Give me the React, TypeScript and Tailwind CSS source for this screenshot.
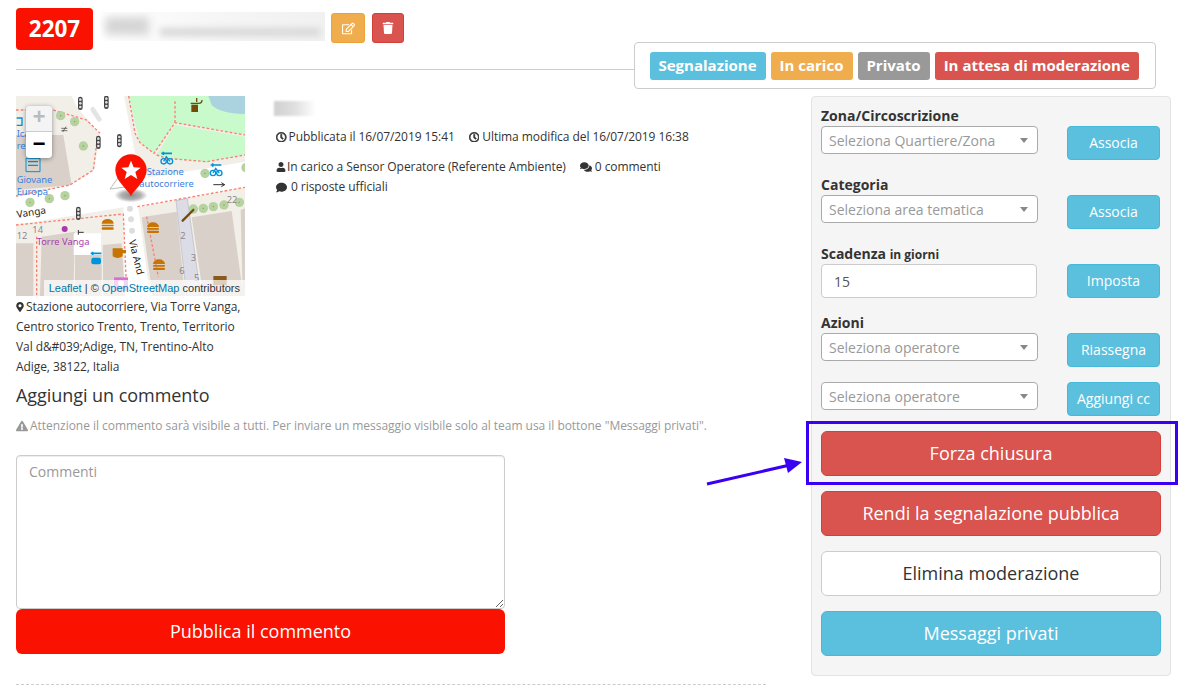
import React from "react";
import { FaRegEdit, FaTrash, FaRegClock, FaUser, FaComments, FaComment, FaMapMarkerAlt, FaExclamationTriangle } from "react-icons/fa";

const Tree = ({ x, y }: { x: number; y: number }) => (
  <g>
    <circle cx={x} cy={y} r={14} fill="#b5d29f" />
    <circle cx={x} cy={y} r={2} fill="#a08a6a" />
  </g>
);
const Light = ({ x, y }: { x: number; y: number }) => (
  <g>
    <rect x={x - 7} y={y - 20} width={14} height={40} rx={7} fill="#444" />
    <circle cx={x} cy={y - 11} r={4} fill="#ddd" />
    <circle cx={x} cy={y} r={4} fill="#ddd" />
    <circle cx={x} cy={y + 11} r={4} fill="#ddd" />
  </g>
);
const Burger = ({ x, y }: { x: number; y: number }) => (
  <g fill="#c77400">
    <path d={`M${x - 18} ${y - 4} a18 14 0 0 1 36 0 z`} />
    <rect x={x - 18} y={y - 1} width={36} height={5} rx={2} />
    <rect x={x - 18} y={y + 7} width={36} height={7} rx={3} />
  </g>
);
const Bike = ({ x, y }: { x: number; y: number }) => (
  <g stroke="#0092da" strokeWidth={4} fill="none">
    <path d={`M${x - 16} ${y - 15} h32 m-26 -5 v10`} strokeWidth={5} />
    <circle cx={x - 9} cy={y + 9} r={8} />
    <circle cx={x + 10} cy={y + 9} r={8} />
    <path d={`M${x - 9} ${y + 9} l8 -14 l11 14`} />
  </g>
);

function MapDrawing() {
  const label = { fontFamily: '"Noto Sans", sans-serif', fontSize: 28 };
  const dash = { fill: "none", stroke: "#fa8072", strokeWidth: 4, strokeDasharray: "8 6" };
  return (
    <svg viewBox="48 18 687 600" width={229} height={200} className="block">
      <defs>
        <radialGradient id="pinShadow">
          <stop offset="0%" stopColor="#000" stopOpacity="0.45" />
          <stop offset="60%" stopColor="#000" stopOpacity="0.3" />
          <stop offset="100%" stopColor="#000" stopOpacity="0" />
        </radialGradient>
      </defs>
      <rect x="48" y="18" width="687" height="600" fill="#ffffff" />
      <path d="M48 18H215L230 50 280 110 300 135 282 240 210 285 48 322Z" fill="#f2efe9" />
      <path d="M48 135H130L190 135 215 285 48 300Z" fill="#d9d0c9" />
      <path d="M48 60L160 60 260 90 300 130" {...dash} />
      <path d="M290 160L280 240 210 285 48 318" {...dash} />
      <path d="M372 18H735V215L620 235 445 262 405 190Z" fill="#f2efe9" />
      <path d="M386 18H735V135L525 98 490 150 462 190 420 158Z" fill="#c8facc" />
      <path d="M525 105L735 140V195L620 215 500 205 470 195Z" fill="#c8facc" />
      <path d="M625 18H735V72Q660 70 635 45Z" fill="#aad3df" />
      <path d="M386 18L405 130 420 158 462 190 525 98 735 135M470 195L500 205 620 215 735 195M525 98L525 30" {...dash} />
      <path d="M330 297L360 255 385 290Z" fill="#fff" stroke="#9a9a9a" strokeWidth="2" />
      <path d="M48 405L370 352 375 618H48Z" fill="#f2efe9" />
      <path d="M48 460H100V618H48ZM125 440L225 425 220 618H120ZM308 465L365 460 375 618H310ZM225 495H305V618H225Z" fill="#d9d0c9" />
      <rect x="221" y="430" width="82" height="65" fill="#fff" />
      <path d="M48 405L370 372 378 560" {...dash} />
      <path d="M110 440V618" {...dash} />
      <path d="M415 352L735 292V618H450Z" fill="#f2efe9" />
      <path d="M425 382L530 365 555 618H458ZM575 382L695 363 730 618H610ZM722 360L735 355V618H728Z" fill="#d9d0c9" />
      <path d="M528 332L562 325 602 618H560Z" fill="#dcdce6" stroke="#b8b8c4" strokeWidth="2" />
      <path d="M412 350L735 292" {...dash} />
      <path d="M440 380L475 560" {...dash} />
      <circle cx="390" cy="356" r="9" fill="#ddd" />
      <circle cx="393" cy="388" r="9" fill="#ddd" />
      <circle cx="396" cy="422" r="9" fill="#ddd" />
      <path d="M278 58L298 88" stroke="#e4e4e4" strokeWidth="14" strokeLinecap="round" />
      {[[182, 77], [224, 95], [250, 168], [90, 337], [148, 326], [195, 317], [580, 357], [610, 355], [640, 350], [672, 345], [718, 337], [615, 250], [738, 233]].map(([x, y]) => (
        <Tree key={`${x}-${y}`} x={x} y={y} />
      ))}
      <Light x={241} y={40} />
      <Light x={319} y={37} />
      <Light x={295} y={157} />
      <Light x={358} y={152} />
      <Light x={235} y={370} />
      <Burger x={323} y={405} />
      <Burger x={459} y={415} />
      <Burger x={477} y={526} />
      <Bike x={500} y={205} />
      <Bike x={648} y={240} />
      <g stroke="#0092da" strokeWidth="5" fill="none"><path d="M272 490h32m-26-5v10" /></g>
      <rect x="274" y="503" width="29" height="20" rx="6" fill="#0092da" />
      <path d="M338 475h30v24q-15 10-30 0ZM368 480h10v10h-10ZM336 506h40" fill="#c77400" />
      <path d="M342 562h42v40h-42Z" fill="#d96fd6" />
      <circle cx="363" cy="580" r="9" fill="#fff" />
      <path d="M640 558h40v28h-40Z" fill="#8a5a1c" />
      <path d="M548 392L580 360" stroke="#734a08" strokeWidth="7" strokeLinecap="round" />
      <rect x="574" y="44" width="20" height="22" fill="#734a08" />
      <path d="M572 40h24q10 0 10-10M590 24v12" stroke="#734a08" strokeWidth="4" fill="none" />
      <path d="M50 84h16v22H50" fill="none" stroke="#0092da" strokeWidth="4" />
      <path d="M78 205h42v40H78Z" fill="none" stroke="#0092da" strokeWidth="3" />
      <path d="M84 215h30M84 226h30" stroke="#0092da" strokeWidth="4" />
      <path d="M184 115h18M184 122h18M198 110l-10 16" stroke="#333" strokeWidth="2" />
      <path d="M640 284h34M664 278l10 6-10 6" stroke="#333" strokeWidth="3" fill="none" />
      <path d="M235 427h16M235 420v14" stroke="#333" strokeWidth="3" />
      <circle cx="194" cy="417" r="9" fill="#ac39ac" />
      <g {...label} fill="#3a7fe0">
        <text x="440" y="255">Stazione</text>
        <text x="418" y="290">autocorriere</text>
        <text x="50" y="280">Giovane</text>
        <text x="50" y="315">Europa</text>
        <text x="50" y="142">Ica</text>
        <text x="50" y="178">rer</text>
      </g>
      <g {...label} fill="#8a8a8a">
        <text x="680" y="340">22</text>
        <text x="97" y="428">14</text>
        <text x="50" y="447">12</text>
        <text x="541" y="446">2</text>
        <text x="572" y="513">3</text>
        <text x="538" y="553">6</text>
        <text x="582" y="574">5</text>
      </g>
      <text {...label} x="110" y="464" fill="#ac39ac">Torre Vanga</text>
      <text {...label} fontSize={30} x="52" y="384" fill="#222" transform="rotate(-9 52 384)">Vanga</text>
      <text {...label} fontSize={30} x="386" y="452" fill="#222" transform="rotate(76 386 452)">Via And</text>
      <ellipse cx="393" cy="316" rx="50" ry="21" fill="url(#pinShadow)" />
      <path d="M393 318C380 295 346 272 346 240A47 47 0 0 1 440 240C440 272 406 295 393 318Z" fill="#fb1100" />
      <path d="M393 212l8 20 21 1-16 13 6 21-19-12-19 12 6-21-16-13 21-1Z" fill="#fff" />
    </svg>
  );
}

const Badge = ({ className, children }: { className: string; children: React.ReactNode }) => (
  <span className={`inline-flex h-[28px] items-center rounded-[3px] pr-[9.5px] pl-[8.5px] text-[15px] font-bold text-white ${className}`}>{children}</span>
);

const FieldLabel = ({ children }: { children: React.ReactNode }) => (
  <div className="h-[20px] text-[14px] leading-[20px] font-bold text-[#333]">{children}</div>
);

const SideButton = ({ children }: { children: React.ReactNode }) => (
  <button className="flex h-[34px] w-[93px] items-center justify-center rounded-[4px] border border-[#46b8da] bg-[#5bc0de] pb-[2px] text-[14px] text-white">{children}</button>
);

const Select2 = ({ children }: { children: string }) => (
  <div className="flex h-[28px] w-[217px] items-center justify-between rounded-[4px] border border-[#aaaaaa] bg-white pr-[9px] pl-[7px] text-[14px] text-[#999999]">
    <span>{children}</span>
    <span className="h-0 w-0 border-x-[4px] border-t-[5px] border-x-transparent border-t-[#888888]" />
  </div>
);

const Row = ({ children, button }: { children: React.ReactNode; button: string }) => (
  <div className="flex items-start justify-between pr-[1px]">
    {children}
    <SideButton>{button}</SideButton>
  </div>
);

const BigButton = ({ className, children }: { className: string; children: string }) => (
  <button className={`flex h-[45px] w-full items-center justify-center rounded-[6px] border text-[18px] ${className}`}>{children}</button>
);

export default function App() {
  const thick = { stroke: "currentColor", strokeWidth: 30 };
  return (
    <div className="relative h-[693px] w-[1182px] overflow-hidden bg-white text-[12px] text-[#333] [font-family:'Open_Sans',sans-serif]">
      <div className="px-[16px] pt-[8px]">
        {/* header */}
        <div className="flex items-start">
          <div className="flex h-[42px] w-[77px] items-center justify-center rounded-[4px] bg-[#fb1100] text-[22.5px] font-bold text-white">2207</div>
          <div className="relative mt-[4px] ml-[7px] h-[29px] w-[225px] overflow-hidden bg-gradient-to-r from-white via-[#f6f6f6] to-[#f1f1f1]">
            <div className="absolute top-[5px] left-[5px] h-[18px] w-[44px] bg-[#d6d6d6] blur-[4px]" />
            <div className="absolute top-[16px] left-[60px] h-[8px] w-[160px] bg-[#d8d8d8] blur-[3px]" />
          </div>
          <button className="mt-[5px] ml-[6px] flex h-[30px] w-[34px] items-center justify-center rounded-[3px] border border-[#eea236] bg-[#f0ad4e] text-[13px] text-white"><FaRegEdit /></button>
          <button className="mt-[5px] ml-[7px] flex h-[30px] w-[32px] items-center justify-center rounded-[3px] border border-[#d43f3a] bg-[#d9534f] text-[12px] text-white"><FaTrash /></button>
        </div>
        <div className="mt-[19px] h-px w-[620px] bg-[#cccccc]" />

        <div className="mt-[26px] flex items-start">
          {/* left column */}
          <div className="w-[750px] shrink-0">
            <div className="flex items-start">
              <div className="w-[229px] shrink-0">
                <div className="relative h-[200px] w-[229px] overflow-hidden">
                  <MapDrawing />
                  <div className="absolute top-[10px] left-[10px] w-[26px] overflow-hidden rounded-[4px] shadow-[0_1px_5px_rgba(0,0,0,0.4)] [font-family:'Liberation_Mono',monospace]">
                    <div className="flex h-[26px] items-center justify-center border-b border-[#cccccc] bg-[#f4f4f4] text-[22px] font-bold text-[#bbbbbb]">+</div>
                    <div className="flex h-[26px] items-center justify-center bg-white text-[22px] font-bold text-black">−</div>
                  </div>
                  <div className="absolute right-0 bottom-0 bg-white/70 px-[5px] text-[11px] leading-[16px] whitespace-nowrap text-[#333] [font-family:'Liberation_Sans',sans-serif]">
                    <span className="text-[#0078a8]">Leaflet</span> | © <span className="text-[#0078a8]">OpenStreetMap</span> contributors
                  </div>
                </div>
                <div className="mt-[1px] text-[12px] leading-[20px] tracking-[-0.08px]">
                  <div className="-ml-[1px] flex items-center gap-[1px] whitespace-nowrap"><FaMapMarkerAlt className="text-[10px]" /> Stazione autocorriere, Via Torre Vanga,</div>
                  <div className="whitespace-nowrap">Centro storico Trento, Trento, Territorio</div>
                  <div className="whitespace-nowrap">Val d&amp;#039;Adige, TN, Trentino-Alto</div>
                  <div className="whitespace-nowrap">Adige, 38122, Italia</div>
                </div>
              </div>
              <div className="ml-[29px] pt-[5px] tracking-[-0.07px]">
                <div className="h-[15px] w-[42px] bg-gradient-to-r from-[#d0d0d0] via-[#e0e0e0] to-white blur-[1px]" />
                <div className="mt-[12px] flex items-center gap-[13px] leading-[18px] whitespace-nowrap">
                  <span className="flex items-center gap-[2px] pl-[2px]"><FaRegClock className="text-[10.5px]" {...thick} /> Pubblicata il 16/07/2019 15:41</span>
                  <span className="ml-[1px] flex items-center gap-[3px]"><FaRegClock className="text-[10.5px]" {...thick} /> Ultima modifica del 16/07/2019 16:38</span>
                </div>
                <div className="mt-[11px] flex items-center gap-[13px] leading-[20px] whitespace-nowrap">
                  <span className="flex items-center gap-[1px] pl-[2px]"><FaUser className="text-[10px]" /> In carico a Sensor Operatore (Referente Ambiente)</span>
                  <span className="ml-[1px] flex items-center gap-[3px]"><FaComments className="text-[12px]" /> 0 commenti</span>
                </div>
                <div className="flex items-center gap-[4px] pl-[2px] leading-[20px] whitespace-nowrap"><FaComment className="text-[11px]" /> 0 risposte ufficiali</div>
              </div>
            </div>
            <h3 className="mt-[5px] text-[18px] leading-[26px] font-normal tracking-[-0.05px]">Aggiungi un commento</h3>
            <p className="mt-[8px] flex items-center gap-[2px] text-[12px] leading-[20px] tracking-[-0.035px] text-[#999999]"><FaExclamationTriangle className="text-[12px]" /> Attenzione il commento sarà visibile a tutti. Per inviare un messaggio visibile solo al team usa il bottone "Messaggi privati".</p>
            <textarea placeholder="Commenti" className="mt-[19px] block h-[154px] w-[489px] rounded-[4px] border border-[#cccccc] bg-white px-[12px] py-[5px] text-[14px] text-[#555555] shadow-[inset_0_1px_1px_rgba(0,0,0,0.075)] outline-none placeholder:text-[#999999]" />
            <button className="flex h-[45px] w-[489px] items-center justify-center rounded-[6px] bg-[#fb1100] text-[18px] text-white">Pubblica il commento</button>
            <div className="mt-[30px] w-[750px] border-t border-dashed border-[#cccccc]" />
          </div>

          {/* right panel */}
          <div className="ml-[45px] w-[360px] shrink-0 rounded-[4px] border border-[#e3e3e3] bg-[#f5f5f5] px-[9px] pt-[9px] pb-[19px]">
            <FieldLabel>Zona/Circoscrizione</FieldLabel>
            <Row button="Associa"><Select2>Seleziona Quartiere/Zona</Select2></Row>
            <div className="mt-[15px]"><FieldLabel>Categoria</FieldLabel></div>
            <Row button="Associa"><Select2>Seleziona area tematica</Select2></Row>
            <div className="mt-[15px]"><FieldLabel>Scadenza <span className="text-[12px]">in giorni</span></FieldLabel></div>
            <Row button="Imposta">
              <input readOnly defaultValue="15" className="h-[34px] w-[216px] rounded-[4px] border border-[#cccccc] bg-white px-[12px] text-[14px] text-[#555555] outline-none" />
            </Row>
            <div className="mt-[15px]"><FieldLabel>Azioni</FieldLabel></div>
            <Row button="Riassegna"><Select2>Seleziona operatore</Select2></Row>
            <div className="mt-[15px]"><Row button="Aggiungi cc"><Select2>Seleziona operatore</Select2></Row></div>
            <div className="mt-[15px] flex flex-col gap-[15px]">
              <BigButton className="border-[#d43f3a] bg-[#d9534f] text-white">Forza chiusura</BigButton>
              <BigButton className="border-[#d43f3a] bg-[#d9534f] text-white">Rendi la segnalazione pubblica</BigButton>
              <BigButton className="border-[#cccccc] bg-white text-[#333333]">Elimina moderazione</BigButton>
              <BigButton className="border-[#46b8da] bg-[#5bc0de] text-white">Messaggi privati</BigButton>
            </div>
          </div>
        </div>
      </div>

      {/* status labels overlay */}
      <div className="absolute top-[42px] left-[634px] flex h-[47px] w-[522px] items-center gap-[5px] rounded-[4px] border border-[#cccccc] bg-white pl-[15px]">
        <Badge className="bg-[#5bc0de]">Segnalazione</Badge>
        <Badge className="bg-[#f0ad4e]">In carico</Badge>
        <Badge className="bg-[#999999]">Privato</Badge>
        <Badge className="bg-[#d9534f]">In attesa di moderazione</Badge>
      </div>

      {/* annotation */}
      <div className="absolute top-[421px] left-[806px] h-[64px] w-[372px] border-[3px] border-[#3a00f5]" />
      <svg className="absolute top-[450px] left-[700px]" width="110" height="40" viewBox="0 0 110 40">
        <path d="M7 34L90 15" stroke="#3a00f5" strokeWidth="3" fill="none" />
        <path d="M84 8L102 12 88 23Z" fill="#3a00f5" />
      </svg>
    </div>
  );
}
